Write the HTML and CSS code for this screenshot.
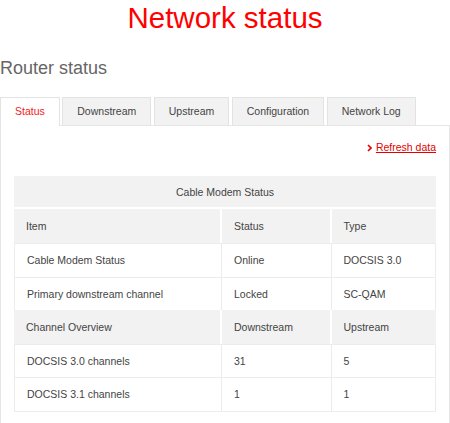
FILE: index.html
```html
<!DOCTYPE html>
<html lang="en">
<head>
<meta charset="utf-8">
<title>Network status</title>
<link rel="stylesheet" href="styles.css">
</head>
<body>
<h1 class="page-title">Network status</h1>
<h2 class="section-title">Router status</h2>
<div class="tabs">
  <ul class="tab-list">
    <li class="tab tab-active">Status</li>
    <li class="tab">Downstream</li>
    <li class="tab">Upstream</li>
    <li class="tab">Configuration</li>
    <li class="tab">Network Log</li>
  </ul>
  <div class="tab-panel">
    <div class="panel-actions">
      <a class="refresh-link" href="#"><svg class="chevron" width="5" height="8" viewBox="0 0 5 8" aria-hidden="true"><polyline points="1,1 4,4 1,7" fill="none" stroke="#e60000" stroke-width="1.6"/></svg>Refresh data</a>
    </div>
    <table class="status-table">
      <colgroup>
        <col class="col-item">
        <col class="col-status">
        <col class="col-type">
      </colgroup>
      <thead>
        <tr><th colspan="3" class="table-title">Cable Modem Status</th></tr>
      </thead>
      <tbody>
        <tr class="row-head row-first"><th>Item</th><th>Status</th><th>Type</th></tr>
        <tr class="row-data"><td>Cable Modem Status</td><td>Online</td><td>DOCSIS 3.0</td></tr>
        <tr class="row-data"><td>Primary downstream channel</td><td>Locked</td><td>SC-QAM</td></tr>
        <tr class="row-head"><th>Channel Overview</th><th>Downstream</th><th>Upstream</th></tr>
        <tr class="row-data"><td>DOCSIS 3.0 channels</td><td>31</td><td>5</td></tr>
        <tr class="row-data row-last"><td>DOCSIS 3.1 channels</td><td>1</td><td>1</td></tr>
      </tbody>
    </table>
  </div>
</div>
</body>
</html>
```
FILE: styles.css
```css
html, body {
  margin: 0;
  padding: 0;
  background: #fff;
}

body {
  font-family: "Liberation Sans", Arial, sans-serif;
  color: #444;
}

.page-title {
  margin: 0;
  font-size: 29.5px;
  line-height: 36px;
  font-weight: normal;
  color: #f00;
  text-align: center;
}

.section-title {
  margin: 20px 0 0;
  font-size: 18px;
  line-height: 24px;
  font-weight: normal;
  color: #666;
}

.tabs {
  margin-top: 17px;
}

.tab-list {
  display: flex;
  align-items: flex-start;
  gap: 2.5px;
  list-style: none;
  margin: 0;
  padding: 0;
  height: 28px;
}

.tab {
  box-sizing: border-box;
  height: 28px;
  padding: 0 14px;
  border: 1px solid #e3e3e3;
  border-bottom: 0;
  background: #f2f2f2;
  font-size: 10.5px;
  line-height: 27px;
  color: #444;
  white-space: nowrap;
}

.tab-active {
  position: relative;
  z-index: 1;
  height: 29px;
  background: #fff;
  color: #f21b1b;
}

.tab-panel {
  border: 1px solid #e6e6e6;
  padding: 13px 13px 24px;
}

.panel-actions {
  text-align: right;
  line-height: 14px;
  margin-bottom: 22px;
}

.refresh-link {
  font-size: 10.5px;
  color: #e60000;
  text-decoration: underline;
}

.chevron {
  margin-right: 4px;
  vertical-align: -0.5px;
}

.status-table {
  width: 422px;
  table-layout: fixed;
  border-collapse: separate;
  border-spacing: 0;
  font-size: 10.5px;
  color: #444;
}

.col-item { width: 208px; }
.col-status { width: 109.5px; }
.col-type { width: 104.5px; }

.status-table th,
.status-table td {
  box-sizing: border-box;
  padding: 0 12px;
  font-weight: normal;
  text-align: left;
  vertical-align: middle;
  border: 0;
}

.status-table .table-title {
  height: 33px;
  background: #f2f2f2;
  border-bottom: 2px solid #fff;
  text-align: center;
}

.row-head th {
  height: 33.5px;
  background: #f2f2f2;
}

.row-first th {
  height: 34px;
}

.row-head th:not(:last-child) {
  border-right: 2px solid #fff;
}

.row-data td {
  height: 33.5px;
  background: #fff;
  border-top: 1px solid #ececec;
}

.row-data td:not(:last-child) {
  border-right: 1px solid #ececec;
}

.row-data td:first-child {
  border-left: 1px solid #ececec;
}

.row-data td:last-child {
  border-right: 1px solid #ececec;
}

.row-last td {
  height: 34.5px;
  border-bottom: 1px solid #ececec;
}
```
